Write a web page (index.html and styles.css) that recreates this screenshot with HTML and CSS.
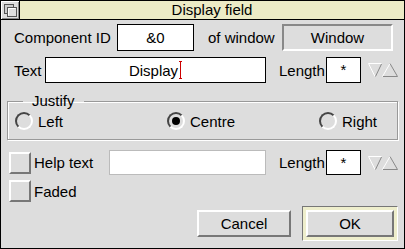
FILE: index.html
```html
<!DOCTYPE html>
<html lang="en">
<head>
    <meta charset="UTF-8">
    <title>Display field</title>
    <link rel="stylesheet" href="styles.css">
</head>
<body>

    <div class="window">
        <!-- Title bar -->
        <div class="titlebar">
            <div class="back-icon">
                <svg width="16" height="16" viewBox="0 0 16 16">
                    <rect x="2.5" y="2.5" width="9" height="9" fill="#ccc" stroke="#555"/>
                    <rect x="5.5" y="5.5" width="9" height="9" fill="#ddd" stroke="#555"/>
                    <path d="M6.5 13.5V6.5H13.5" fill="none" stroke="#fff"/>
                </svg>
            </div>
            <div class="title">Display field</div>
        </div>

        <div class="content">
            <div class="row row-id">
                <span class="lbl lbl-id">Component ID</span>
                <div class="field field-id">&amp;0</div>
                <span class="lbl lbl-of">of window</span>
                <div class="display">Window</div>
            </div>

            <div class="row row-text">
                <span class="lbl lbl-text">Text</span>
                <div class="field field-text">Display<span class="caret"></span></div>
                <span class="lbl lbl-length">Length</span>
                <div class="field field-len">*</div>
                <svg class="adjusters" width="32" height="16" viewBox="0 0 32 16">
                    <path d="M1.5 1.5H14.5" stroke="#fff"/>
                    <path d="M1.5 1.5L8 14.5" stroke="#fff"/>
                    <path d="M14.5 2L8.5 14.5" stroke="#888"/>
                    <path d="M23 1.5L15.5 14.5" stroke="#fff"/>
                    <path d="M23 1.5L30.5 14.5" stroke="#888"/>
                    <path d="M16 14.5H30.5" stroke="#888"/>
                </svg>
            </div>

            <!-- Justify group -->
            <fieldset class="justify">
                <legend>Justify</legend>
                <div class="radios">
                    <div class="radio radio-left"><span class="radio-icon"></span>Left</div>
                    <div class="radio radio-centre"><span class="radio-icon on"></span>Centre</div>
                    <div class="radio"><span class="radio-icon"></span>Right</div>
                </div>
            </fieldset>

            <div class="row row-help">
                <span class="checkbox"></span>
                <span class="lbl lbl-help">Help text</span>
                <div class="field field-help"></div>
                <span class="lbl lbl-length">Length</span>
                <div class="field field-len">*</div>
                <svg class="adjusters" width="32" height="16" viewBox="0 0 32 16">
                    <path d="M1.5 1.5H14.5" stroke="#fff"/>
                    <path d="M1.5 1.5L8 14.5" stroke="#fff"/>
                    <path d="M14.5 2L8.5 14.5" stroke="#888"/>
                    <path d="M23 1.5L15.5 14.5" stroke="#fff"/>
                    <path d="M23 1.5L30.5 14.5" stroke="#888"/>
                    <path d="M16 14.5H30.5" stroke="#888"/>
                </svg>
            </div>

            <div class="row row-faded">
                <span class="checkbox"></span>
                <span class="lbl lbl-help">Faded</span>
            </div>

            <!-- Action buttons -->
            <div class="buttons">
                <div class="button btn-cancel">Cancel</div>
                <div class="default-ring">
                    <div class="button btn-ok">OK</div>
                </div>
            </div>
        </div>
    </div>

</body>
</html>
```

FILE: styles.css
```css
/* Global Reset */
* {
    margin: 0;
    padding: 0;
    box-sizing: border-box;
}

body {
    font-family: 'Liberation Sans', Arial, sans-serif;
    font-size: 15px;
    color: #000;
    background-color: #ddd;
}

/* Window frame */
.window {
    width: 405px;
    height: 249px;
    border: 1px solid #000;
    background-color: #ddd;
}

.titlebar {
    display: flex;
    height: 19px;
    border-bottom: 1px solid #000;
}

.back-icon {
    width: 19px;
    height: 18px;
    border-right: 1px solid #000;
    background-color: #ddd;
    box-shadow: inset 1px 1px 0 #fff, inset -1px -1px 0 #888;
    display: flex;
    align-items: center;
    justify-content: center;
}

.title {
    flex: 1;
    background-color: #ecebc6;
    text-align: center;
    line-height: 18px;
}

/* Rows */
.content {
    padding-top: 4px;
}

.row {
    display: flex;
    align-items: center;
}

.row-id {
    height: 27px;
    padding-left: 13px;
}

.row-text {
    height: 26px;
    margin-top: 6px;
    padding-left: 13px;
}

.lbl-id {
    width: 103px;
}

.lbl-of {
    width: 74px;
    margin-left: 14px;
}

.lbl-text {
    width: 31px;
}

.lbl-length {
    width: 47px;
    margin-left: 13px;
}

/* Fields */
.field {
    height: 100%;
    background-color: #fff;
    border: 1px solid #000;
    display: flex;
    align-items: center;
    justify-content: center;
}

.field-id {
    width: 77px;
}

.field-text {
    width: 221px;
}

.field-len {
    width: 35px;
    align-items: flex-start;
    padding-top: 3px;
}

.field-help {
    width: 157px;
    border-color: #bbb;
}

.caret {
    width: 3px;
    height: 18px;
    margin-left: 1px;
    border-top: 1px solid #c00;
    border-bottom: 1px solid #c00;
    background: linear-gradient(#c00, #c00) center / 1px 100% no-repeat;
}

.display {
    width: 111px;
    height: 100%;
    border: 2px solid;
    border-color: #888 #fff #fff #888;
    display: flex;
    align-items: center;
    justify-content: center;
}

.adjusters {
    margin-left: 6px;
}

/* Justify group */
.justify {
    margin: 10px 6px 0 6px;
    border: 1px solid #999;
    box-shadow: 1px 1px 0 #fff, inset 1px 1px 0 #fff;
    padding: 0 0 9px 0;
}

.justify legend {
    margin-left: 15px;
    padding: 0 9px;
    line-height: 16px;
}

.radios {
    display: flex;
    align-items: center;
    height: 18px;
    margin-top: 3px;
    padding-left: 7px;
}

.radio {
    display: flex;
    align-items: center;
    gap: 5px;
}

.radio-left,
.radio-centre {
    width: 152px;
}

.radio-icon {
    width: 18px;
    height: 18px;
    border-radius: 50%;
    border: 2px solid;
    border-color: #444 #fff #fff #444;
    display: flex;
    align-items: center;
    justify-content: center;
}

.radio-icon.on::after {
    content: "";
    width: 8px;
    height: 8px;
    border-radius: 50%;
    background-color: #000;
}

/* Option rows */
.row-help {
    height: 25px;
    margin-top: 10px;
    padding-left: 8px;
}

.row-faded {
    height: 22px;
    margin-top: 5px;
    padding-left: 8px;
}

.checkbox {
    width: 22px;
    height: 22px;
    border: 2px solid;
    border-color: #fff #777 #777 #fff;
}

.lbl-help {
    width: 75px;
    margin-left: 3px;
}

/* Buttons */
.buttons {
    display: flex;
    justify-content: flex-end;
    align-items: center;
    height: 35px;
    margin-top: 4px;
    padding-right: 6px;
}

.button {
    height: 27px;
    border: 2px solid;
    border-color: #fff #777 #777 #fff;
    display: flex;
    align-items: center;
    justify-content: center;
}

.btn-cancel {
    width: 94px;
}

.default-ring {
    width: 96px;
    height: 35px;
    margin-left: 11px;
    padding: 3px;
    background-color: #eeeecc;
    border: 1px solid;
    border-color: #777 #fff #fff #777;
}

.btn-ok {
    width: 88px;
    background-color: #ddd;
}
```
